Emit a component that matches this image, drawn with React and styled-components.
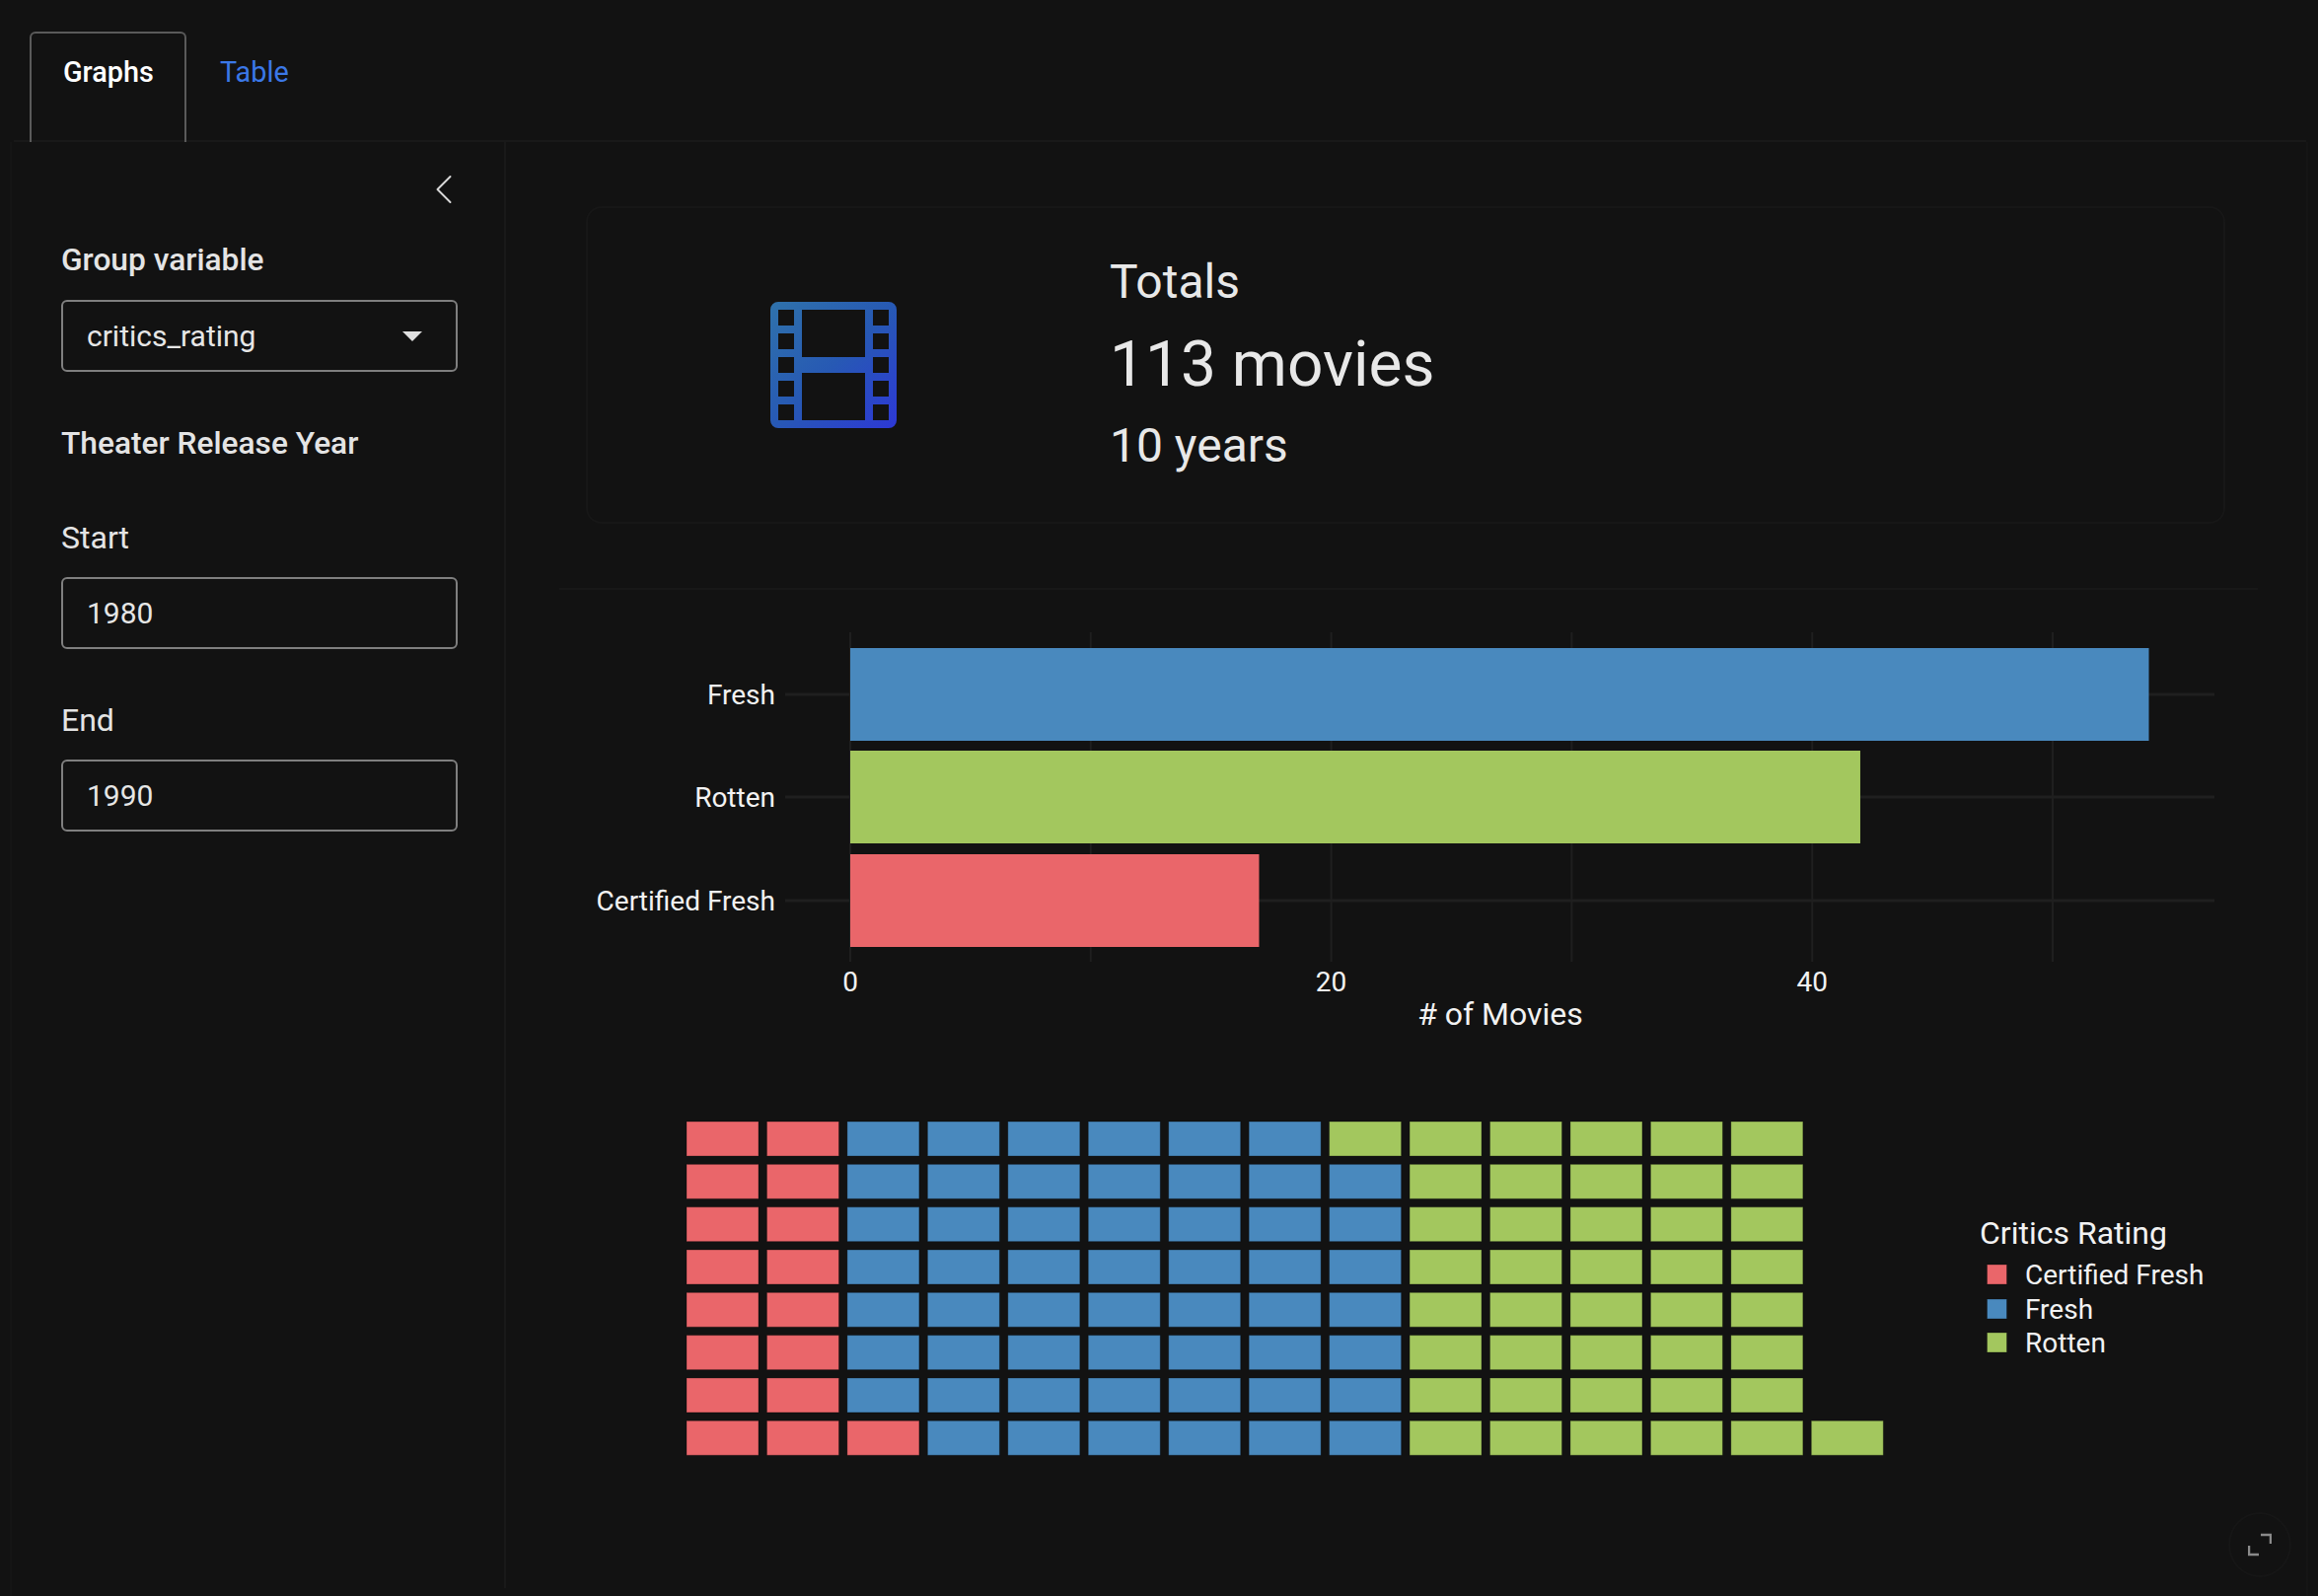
import React from 'react';
import styled, { createGlobalStyle } from 'styled-components';
import { ChevronLeft } from 'lucide-react';

const GlobalStyle = createGlobalStyle`
  html, body {
    margin: 0;
    padding: 0;
    background: #121212;
  }
  body {
    font-family: Roboto, "Liberation Sans", sans-serif;
    color: #e6e6e6;
  }
  * {
    box-sizing: border-box;
  }
`;

const Page = styled.div`
  position: relative;
  width: 2350px;
  height: 1618px;
  overflow: hidden;
  background: #121212;
`;

const TabBar = styled.nav`
  display: flex;
  height: 144px;
  margin: 0 12px 0 14px;
  padding: 32px 0 0 16px;
  border-bottom: 2px solid #191919;
`;

const Tab = styled.div`
  width: ${(p) => (p.$active ? '159px' : '140px')};
  height: 112px;
  padding: ${(p) => (p.$active ? '19px 0 0 32px' : '21px 0 0 34px')};
  font-size: 28.8px;
  line-height: 40px;
  font-weight: ${(p) => (p.$active ? 500 : 400)};
  color: ${(p) => (p.$active ? '#ffffff' : '#3b78e7')};
  border: ${(p) => (p.$active ? '2px solid #5a5a5a' : 'none')};
  border-bottom: none;
  border-radius: 6px 6px 0 0;
`;

const Body = styled.div`
  display: flex;
  align-items: flex-start;
  width: 2330px;
  height: 1474px;
  margin-left: 10px;
  border-left: 2px solid #151515;
  border-right: 2px solid #151515;
`;

const Sidebar = styled.aside`
  flex: 0 0 501px;
  height: 1466px;
  padding: 0 47px 0 50px;
  border-right: 2px solid #191919;
`;

const Collapse = styled.div`
  display: flex;
  justify-content: flex-end;
  height: 100px;
  padding-top: 22px;
  margin-right: -12px;
  color: #d8d8d8;
`;

const FieldLabel = styled.div`
  font-size: ${(p) => (p.$strong ? '31.7px' : '32px')};
  line-height: 40px;
  font-weight: ${(p) => (p.$strong ? 500 : 400)};
  color: #e4e4e4;
  margin: ${(p) => p.$margin};
`;

const Field = styled.div`
  display: flex;
  align-items: center;
  justify-content: space-between;
  width: 402px;
  height: 73px;
  padding: 0 34px 0 24px;
  font-size: 30px;
  color: #e6e6e6;
  border: 2px solid #7f7f7f;
  border-radius: 6px;
`;

const Caret = styled.span`
  width: 0;
  height: 0;
  border-left: 10px solid transparent;
  border-right: 10px solid transparent;
  border-top: 10px solid #e0e0e0;
`;

const Main = styled.main`
  flex: 1;
  padding: 65px 0 0 81px;
`;

const StatCard = styled.section`
  display: flex;
  width: 1662px;
  height: 322px;
  border: 2px solid #171717;
  border-radius: 16px;
`;

const StatIcon = styled.div`
  display: flex;
  align-items: center;
  flex: 0 0 529px;
  padding-left: 185px;
`;

const StatText = styled.div`
  display: flex;
  flex-direction: column;
  padding-top: 43px;
  color: #e8e8e8;
`;

const StatLine = styled.div`
  font-size: ${(p) => p.$size}px;
  line-height: ${(p) => p.$height}px;
`;

const Rule = styled.div`
  width: 1722px;
  height: 2px;
  margin: 65px 0 0 -27px;
  background: #181818;
`;

const Chart = styled.svg`
  display: block;
  margin-left: -27px;
  font-family: Roboto, "Liberation Sans", sans-serif;
`;

const ExpandButton = styled.div`
  position: absolute;
  left: 2259px;
  top: 1533px;
  display: flex;
  align-items: center;
  justify-content: center;
  width: 64px;
  height: 66px;
  border: 2px solid #161616;
  border-radius: 50%;
`;

const colors = {
  red: '#ea666a',
  blue: '#4989be',
  green: '#a3c75e',
};

const FilmIcon = () => (
  <svg width="128" height="128" viewBox="0 0 128 128">
    <defs>
      <linearGradient id="film" x1="0" y1="0" x2="1" y2="1">
        <stop offset="0" stopColor="#2f72ab" />
        <stop offset="0.5" stopColor="#2759b4" />
        <stop offset="1" stopColor="#2d38d6" />
      </linearGradient>
    </defs>
    <path
      fill="url(#film)"
      fillRule="evenodd"
      d="M8 0H120A8 8 0 0 1 128 8V120A8 8 0 0 1 120 128H8A8 8 0 0 1 0 120V8A8 8 0 0 1 8 0Z
         M8 8V24H24V8Z M8 32V48H24V32Z M8 56V72H24V56Z M8 80V96H24V80Z M8 104V120H24V104Z
         M104 8V24H120V8Z M104 32V48H120V32Z M104 56V72H120V56Z M104 80V96H120V80Z M104 104V120H120V104Z
         M32 8V56H96V8Z M32 72V120H96V72Z"
    />
  </svg>
);

const movieBars = [
  { label: 'Fresh', value: 54, color: colors.blue, y: 657 },
  { label: 'Rotten', value: 42, color: colors.green, y: 761 },
  { label: 'Certified Fresh', value: 17, color: colors.red, y: 866 },
];

// the plot is drawn in page coords, offset by the svg's own origin
const BarChart = () => {
  const ox = 567;
  const oy = 598;
  const x0 = 862 - ox;
  const unit = 24.38;
  const top = 641 - oy;
  const bottom = 975 - oy;
  return (
    <Chart width="1720" height="470">
      {[0, 10, 20, 30, 40, 50].map((v) => (
        <line key={v} x1={x0 + v * unit} x2={x0 + v * unit} y1={top} y2={bottom} stroke="#1f1f1f" strokeWidth="2" />
      ))}
      {movieBars.map((b) => (
        <g key={b.label}>
          <line x1={796 - ox} x2={2245 - ox} y1={b.y + 47 - oy} y2={b.y + 47 - oy} stroke="#1f1f1f" strokeWidth="3" />
          <rect x={x0} y={b.y - oy} width={b.value * unit} height="94" fill={b.color} />
          <text x={786 - ox} y={b.y + 57 - oy} fontSize="28" fill="#f2f2f2" textAnchor="end">
            {b.label}
          </text>
        </g>
      ))}
      {[0, 20, 40].map((v) => (
        <text key={v} x={x0 + v * unit} y={1005 - oy} fontSize="28" fill="#f2f2f2" textAnchor="middle">
          {v}
        </text>
      ))}
      <text x={1521 - ox} y={1039 - oy} fontSize="32" fill="#f2f2f2" textAnchor="middle">
        # of Movies
      </text>
    </Chart>
  );
};

// every cell of the waffle, column by column
const waffleCells = () => {
  const cells = [];
  const fill = (col, from, to, color) => {
    for (let row = from; row <= to; row++) cells.push({ col, row, color });
  };
  fill(0, 0, 7, colors.red);
  fill(1, 0, 7, colors.red);
  fill(2, 7, 7, colors.red);
  fill(2, 0, 6, colors.blue);
  for (let c = 3; c <= 7; c++) fill(c, 0, 7, colors.blue);
  fill(8, 1, 7, colors.blue);
  fill(8, 0, 0, colors.green);
  for (let c = 9; c <= 13; c++) fill(c, 0, 7, colors.green);
  fill(14, 7, 7, colors.green);
  return cells;
};

const legend = [
  { label: 'Certified Fresh', color: colors.red, y: 1282 },
  { label: 'Fresh', color: colors.blue, y: 1317 },
  { label: 'Rotten', color: colors.green, y: 1351 },
];

const WaffleChart = () => {
  const ox = 567;
  const oy = 1068;
  return (
    <Chart width="1781" height="450">
      {waffleCells().map((c) => (
        <rect
          key={`${c.col}-${c.row}`}
          x={696 + c.col * 81.45 - ox}
          y={1137 + c.row * 43.33 - oy}
          width="73"
          height="35"
          fill={c.color}
          stroke="rgba(0,0,0,0.3)"
          strokeWidth="1"
        />
      ))}
      <text x={2007 - ox} y={1261 - oy} fontSize="32" fill="#f2f2f2">
        Critics Rating
      </text>
      {legend.map((l) => (
        <g key={l.label}>
          <rect x={2014.5 - ox} y={l.y - oy} width="20" height="20" fill={l.color} stroke="rgba(0,0,0,0.3)" strokeWidth="1" />
          <text x={2053 - ox} y={l.y + 20 - oy} fontSize="28" fill="#f2f2f2">
            {l.label}
          </text>
        </g>
      ))}
    </Chart>
  );
};

const App = () => (
  <Page>
    <GlobalStyle />
    <TabBar>
      <Tab $active>Graphs</Tab>
      <Tab>Table</Tab>
    </TabBar>
    <Body>
      <Sidebar>
        <Collapse>
          <ChevronLeft size={52} strokeWidth={0.9} />
        </Collapse>
        <FieldLabel $strong $margin="0 0 20px">Group variable</FieldLabel>
        <Field>
          critics_rating
          <Caret />
        </Field>
        <FieldLabel $strong $margin="53px 0 55px">Theater Release Year</FieldLabel>
        <FieldLabel $margin="0 0 20px">Start</FieldLabel>
        <Field>1980</Field>
        <FieldLabel $margin="52px 0 20px">End</FieldLabel>
        <Field>1990</Field>
      </Sidebar>
      <Main>
        <StatCard>
          <StatIcon>
            <FilmIcon />
          </StatIcon>
          <StatText>
            <StatLine $size={48} $height={64}>Totals</StatLine>
            <StatLine $size={64} $height={104}>113 movies</StatLine>
            <StatLine $size={48} $height={60}>10 years</StatLine>
          </StatText>
        </StatCard>
        <Rule />
        <BarChart />
        <WaffleChart />
      </Main>
    </Body>
    <ExpandButton>
      <svg width="24" height="24" viewBox="0 0 24 24" fill="none" stroke="#8a8a8a" strokeWidth="2.5">
        <path d="M13 2H23V11" />
        <path d="M1 13V22H11" />
      </svg>
    </ExpandButton>
  </Page>
);

export default App;
